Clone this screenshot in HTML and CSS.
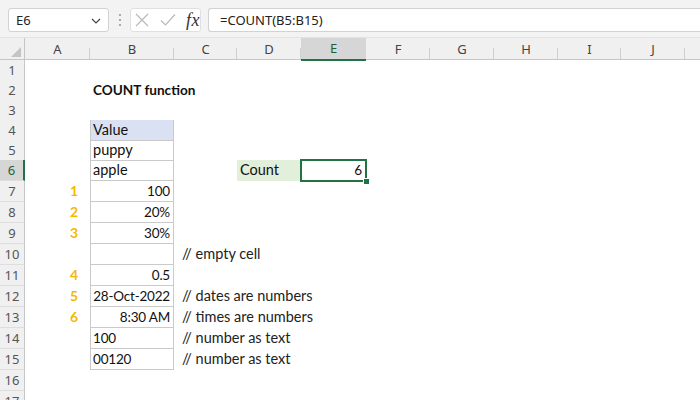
FILE: index.html
```html
<!DOCTYPE html>
<html>
<head>
<meta charset="utf-8">
<link rel="stylesheet" href="styles.css">
</head>
<body>
<div class="app">
  <div class="toolbar">
    <div class="namebox">
      <span>E6</span>
      <svg class="chev" width="10" height="6" viewBox="0 0 10 6"><path d="M1 1 L5 5 L9 1" fill="none" stroke="#444" stroke-width="1.2"/></svg>
    </div>
    <svg class="dots" width="4" height="14" viewBox="0 0 4 14"><circle cx="2" cy="2" r="1.1" fill="#9a9a9a"/><circle cx="2" cy="7" r="1.1" fill="#9a9a9a"/><circle cx="2" cy="12" r="1.1" fill="#9a9a9a"/></svg>
    <div class="fxbox">
      <svg width="14" height="14" viewBox="0 0 14 14"><path d="M1 1 L13 13 M13 1 L1 13" stroke="#b9b9b9" stroke-width="1.2" fill="none"/></svg>
      <svg width="16" height="14" viewBox="0 0 16 14"><path d="M1 7.5 L5.5 12 L15 1.5" stroke="#b9b9b9" stroke-width="1.2" fill="none"/></svg>
      <span class="fx">fx</span>
    </div>
    <div class="formula">=COUNT(B5:B15)</div>
  </div>

  <div class="colheads">
    <div class="corner"><span class="tri"></span></div>
    <div class="ch">A</div><div class="ch">B</div><div class="ch">C</div><div class="ch">D</div>
    <div class="ch sel">E</div><div class="ch">F</div><div class="ch">G</div><div class="ch">H</div>
    <div class="ch">I</div><div class="ch">J</div><div class="ch last"></div>
  </div>

  <div class="sheet">
    <div class="row"><div class="rh">1</div></div>
    <div class="row"><div class="rh">2</div><div class="cell cb title">COUNT function</div></div>
    <div class="row"><div class="rh">3</div></div>
    <div class="row"><div class="rh">4</div><div class="cell cb box head">Value</div></div>
    <div class="row"><div class="rh">5</div><div class="cell cb box">puppy</div></div>
    <div class="row tall"><div class="rh selrow">6</div><div class="cell cb box">apple</div><div class="cell cd label">Count</div><div class="cell ce num active">6</div></div>
    <div class="row tall"><div class="rh">7</div><div class="cell ca mark">1</div><div class="cell cb box num">100</div></div>
    <div class="row tall"><div class="rh">8</div><div class="cell ca mark">2</div><div class="cell cb box num">20%</div></div>
    <div class="row tall"><div class="rh">9</div><div class="cell ca mark">3</div><div class="cell cb box num">30%</div></div>
    <div class="row tall"><div class="rh">10</div><div class="cell cb box"></div><div class="cell cc note">// empty cell</div></div>
    <div class="row tall"><div class="rh">11</div><div class="cell ca mark">4</div><div class="cell cb box num">0.5</div></div>
    <div class="row tall"><div class="rh">12</div><div class="cell ca mark">5</div><div class="cell cb box num">28-Oct-2022</div><div class="cell cc note">// dates are numbers</div></div>
    <div class="row tall"><div class="rh">13</div><div class="cell ca mark">6</div><div class="cell cb box num">8:30 AM</div><div class="cell cc note">// times are numbers</div></div>
    <div class="row tall"><div class="rh">14</div><div class="cell cb box digits">100</div><div class="cell cc note">// number as text</div></div>
    <div class="row tall"><div class="rh">15</div><div class="cell cb box digits">00120</div><div class="cell cc note">// number as text</div></div>
    <div class="row tall"><div class="rh">16</div></div>
    <div class="row tall"><div class="rh">17</div></div>
  </div>
</div>
</body>
</html>
```

FILE: styles.css
```css
* { box-sizing: border-box; }
html, body { margin: 0; padding: 0; }
body { width: 700px; height: 400px; overflow: hidden; background: #fff; font-family: Lato, "Noto Sans", sans-serif; }

.app { width: 700px; height: 400px; overflow: hidden; }

.toolbar {
  height: 38px;
  background: #f3f3f3;
  display: flex;
  align-items: flex-start;
  padding-top: 8px;
  padding-left: 8px;
  border-bottom: 1px solid #e2e2e2;
}
.namebox {
  width: 101px; height: 24px;
  background: #fff;
  border: 1px solid #d2d2d2;
  border-radius: 3px;
  display: flex; align-items: center; justify-content: space-between;
  padding: 0 7px 0 7px;
  font-family: "Noto Sans", sans-serif; font-size: 13px; color: #222;
}
.chev { margin-top: 1px; }
.dots { margin: 5px 0 0 9px; }
.fxbox {
  margin-left: 8px;
  width: 71px; height: 24px;
  background: #fff;
  border: 1px solid #e0e0e0;
  border-radius: 3px;
  display: flex; align-items: center;
  padding-left: 4px; gap: 11px;
}
.fx { font-family: "Liberation Serif", serif; font-style: italic; font-size: 18px; color: #333; margin-left: -1px; letter-spacing: 0.5px; }
.formula {
  margin-left: 7px;
  flex: 1; height: 24px;
  background: #fff;
  border: 1px solid #d2d2d2;
  border-right: none;
  border-radius: 3px 0 0 3px;
  padding-left: 11px;
  font-family: "Noto Sans", sans-serif; font-size: 13px; color: #222;
  line-height: 22px;
}

.colheads {
  display: grid;
  grid-template-columns: 25px 65px 84px 63px 64px 65px 64px 64px 64px 63px 64px 1fr;
  height: 22px;
  background: #f0f0f0;
  border-bottom: 1px solid #c6c6c6;
}
.corner { position: relative; border-right: 1px solid #c6c6c6; }
.tri {
  position: absolute; right: 3px; bottom: 3px;
  width: 0; height: 0;
  border-left: 10px solid transparent;
  border-bottom: 10px solid #c4c4c4;
}
.ch {
  position: relative;
  text-align: center;
  font-family: "Noto Sans", sans-serif; font-size: 13px; color: #444;
  line-height: 22px;
}
.ch::after {
  content: ""; position: absolute; right: 0; bottom: 1px;
  width: 1px; height: 11px; background: #cfcfcf;
}
.ch.last::after { display: none; }
.ch.sel { background: #d6d6d6; border-bottom: 2px solid #217346; color: #1b5e38; line-height: 21px; margin-bottom: -1px; }
.ch.sel::after { display: none; }

.row {
  display: grid;
  grid-template-columns: 25px 65px 84px 63px 64px 65px 64px 64px 64px 63px 64px 1fr;
  height: 20px;
}
.row.tall { height: 21px; }
.rh {
  grid-column: 1;
  background: #f0f0f0;
  border-right: 1px solid #c6c6c6;
  border-bottom: 1px solid #dedede;
  text-align: center;
  font-family: "Noto Sans", sans-serif; font-size: 13px; color: #555;
  line-height: 20px;
}
.rh.selrow { background: #d6d6d6; border-right: 2px solid #217346; color: #1b5e38; }

.cell {
  font-size: 14.5px; color: #111;
  line-height: 20px;
  padding: 0 3px;
  white-space: nowrap;
}
.ca { grid-column: 2; }
.cb { grid-column: 3; }
.cc { grid-column: 4 / 8; }
.cd { grid-column: 5; }
.ce { grid-column: 6; }

.title { font-weight: 700; font-size: 13.6px; }
.box { border-left: 1px solid #cacaca; border-right: 1px solid #cacaca; border-bottom: 1px solid #cacaca; padding-left: 2px; }
.head { background: #d9e1f2; }
.num { text-align: right; font-size: 13.5px; letter-spacing: -0.2px; padding-right: 3px; }
.digits { font-size: 13.5px; letter-spacing: -0.2px; }
.mark { text-align: right; padding-right: 12px; color: #f5b800; font-weight: 700; font-size: 14px; }
.note { padding-left: 8px; color: #222; }
.label { background: #e2efda; }
.active { position: relative; padding-right: 4px; }
.active::before {
  content: ""; position: absolute; left: -1px; top: -1px; right: -1px; bottom: -1px;
  border: 2px solid #217346;
}
.active::after {
  content: ""; position: absolute; right: -3px; bottom: -3px;
  width: 5px; height: 5px; background: #217346;
  outline: 1px solid #fff;
}
```
